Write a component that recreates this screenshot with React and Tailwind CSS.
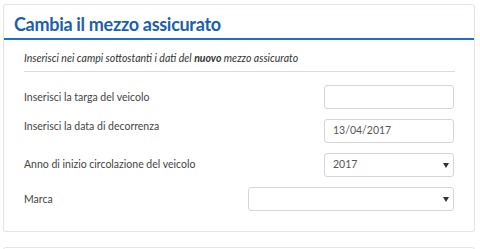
import React from "react";

function Field({ className = "", children }) {
  return (
    <div
      className={`h-[24px] border border-[#d6d6d6] rounded-[3px] bg-white flex items-center justify-between px-[8px] text-[10.5px] text-[#555] ${className}`}
    >
      {children}
    </div>
  );
}

function Caret() {
  return (
    <span className="w-0 h-0 border-l-[3px] border-r-[3px] border-t-[5px] border-l-transparent border-r-transparent border-t-[#333] mr-[-4px]" />
  );
}

export default function App() {
  return (
    <div className="w-[480px] h-[249px] bg-white overflow-hidden pt-[4px] font-['Lato','Open_Sans',sans-serif]">
      {/* main card */}
      <div className="ml-[3px] w-[472px] border border-[#e3e3e3] border-t-[#f2dede] rounded-[3px]">
        <div className="h-[35px] border-b-2 border-[#1f6fc5] pl-[10px] flex items-end pb-[5px]">
          <h1 className="text-[18px] font-bold text-[#1b5fae] leading-none tracking-[-0.3px]">
            Cambia il mezzo assicurato
          </h1>
        </div>

        <div className="px-[20px] pt-[10px] pb-[20px]">
          <p className="text-[10.5px] italic text-[#333] leading-[16px]">
            Inserisci nei campi sottostanti i dati del{" "}
            <span className="font-bold">nuovo</span> mezzo assicurato
          </p>
          <div className="h-px bg-[#dcdcdc] mt-[5px] mr-[-1px]" />

          <div className="mt-[13px] flex flex-col gap-[10px] text-[10.5px] text-[#444]">
            <div className="flex items-start justify-between">
              <span className="pt-[5px] leading-[14px]">Inserisci la targa del veicolo</span>
              <Field className="w-[130px]" />
            </div>
            <div className="flex items-start justify-between">
              <span className="pt-[0px] leading-[14px]">Inserisci la data di decorrenza</span>
              <Field className="w-[130px]">13/04/2017</Field>
            </div>
            <div className="flex items-start justify-between">
              <span className="pt-[4px] leading-[14px]">Anno di inizio circolazione del veicolo</span>
              <Field className="w-[130px]">
                <span>2017</span>
                <Caret />
              </Field>
            </div>
            <div className="flex items-start justify-between">
              <span className="pt-[5px] leading-[14px]">Marca</span>
              <Field className="w-[206px]">
                <span />
                <Caret />
              </Field>
            </div>
          </div>
        </div>
      </div>

      {/* next card */}
      <div className="ml-[3px] mt-[15px] w-[472px] h-[20px] border border-[#e3e3e3] rounded-[3px]" />
    </div>
  );
}
